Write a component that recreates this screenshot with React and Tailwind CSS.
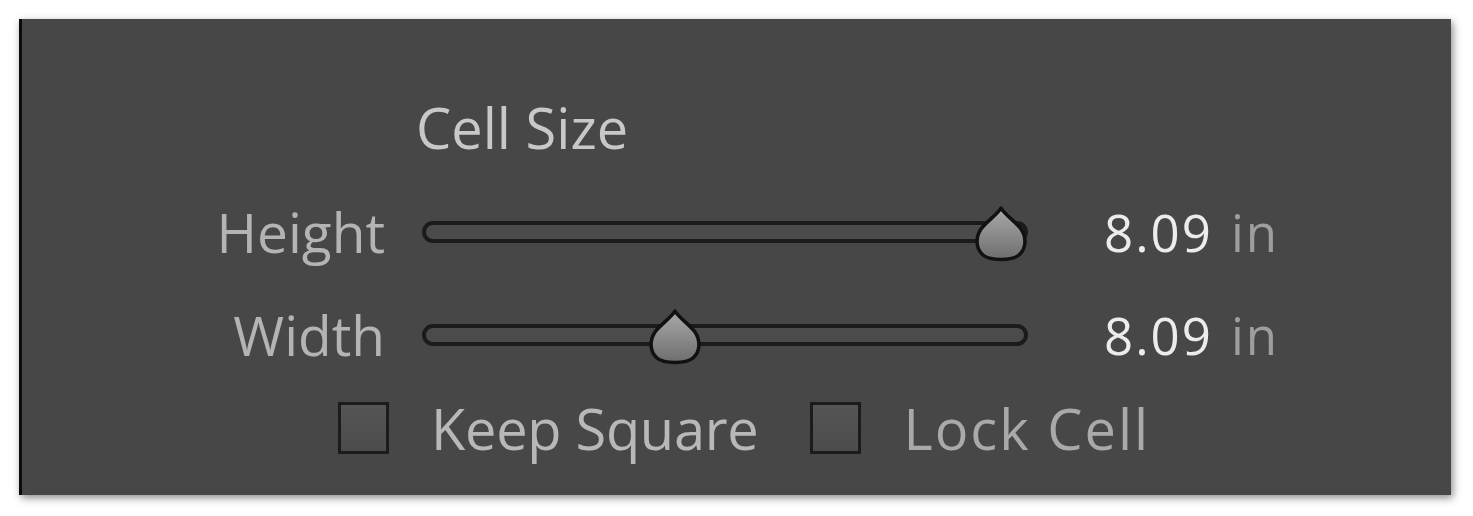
import { useState } from "react";

function Thumb() {
  return (
    <svg width="60" height="58" viewBox="0 0 60 58" className="block">
      <defs>
        <linearGradient id="thumbFill" x1="0" y1="0" x2="0" y2="1">
          <stop offset="0" stopColor="#a9a9a9" />
          <stop offset="1" stopColor="#6e6e6e" />
        </linearGradient>
      </defs>
      <path
        d="M30 3 C33 9 44 16 50 24 C56 33 55 44 48 50 C41 56 19 56 12 50 C5 44 4 33 10 24 C16 16 27 9 30 3 Z"
        fill="url(#thumbFill)"
        stroke="#111"
        strokeWidth="3.5"
        strokeLinejoin="round"
      />
    </svg>
  );
}

function Slider({ value }) {
  return (
    <div className="relative h-[58px] w-[606px]">
      <div className="absolute left-0 right-0 top-[18px] h-[22px] rounded-full border-[4px] border-[#1b1b1b] bg-[#4b4b4b]" />
      <div
        className="absolute top-[2px] -translate-x-1/2"
        style={{ left: `${value}%` }}
      >
        <Thumb />
      </div>
    </div>
  );
}

function Checkbox({ label, className }) {
  const [checked, setChecked] = useState(false);

  return (
    <button
      type="button"
      onClick={() => setChecked(!checked)}
      className="flex items-center"
    >
      <span className="block h-[52px] w-[51px] border-[3px] border-[#1c1c1c] bg-gradient-to-b from-[#555555] to-[#4c4c4c]" />
      <span className={className}>{label}</span>
    </button>
  );
}

const rows = [
  { label: "Height", value: 95.5, amount: "8.09" },
  { label: "Width", value: 41.8, amount: "8.09" },
];

export default function App() {
  return (
    <div
      className="h-[516px] w-[1473px] bg-white pl-[19px] pt-[19px]"
      style={{ fontFamily: '"Open Sans", "Noto Sans", sans-serif' }}
    >
      <div className="h-[476px] w-[1432px] border-l-[3px] border-[#0c0c0c] bg-[#474747] shadow-[2px_3px_8px_rgba(0,0,0,0.45)]">
        <div className="pl-[394px] pt-[80px] text-[56px] leading-[56px] text-[#c8c8c6]">
          Cell Size
        </div>

        {rows.map((row, i) => (
          <div
            key={row.label}
            className={`flex items-center ${i === 0 ? "mt-[48px]" : "mt-[45px]"}`}
          >
            <div className="w-[363px] text-right text-[55px] leading-[56px] text-[#b4b4b4]">
              {row.label}
            </div>
            <div className="ml-[37px]">
              <Slider value={row.value} />
            </div>
            <div className="ml-[76px] text-[51px] leading-[56px] tracking-[2px]">
              <span className="text-[#ececec]">{row.amount}</span>
              <span className="ml-[18px] text-[#9e9e9e]">in</span>
            </div>
          </div>
        ))}

        <div className="mt-[36px] flex items-center pl-[316px]">
          <Checkbox
            label="Keep Square"
            className="ml-[42px] text-[56px] leading-[56px] tracking-[-0.3px] text-[#b8b8b8]"
          />
          <div className="ml-[52px]">
            <Checkbox
              label="Lock Cell"
              className="ml-[42px] text-[56px] leading-[56px] tracking-[2px] text-[#a9a9a9]"
            />
          </div>
        </div>
      </div>
    </div>
  );
}
